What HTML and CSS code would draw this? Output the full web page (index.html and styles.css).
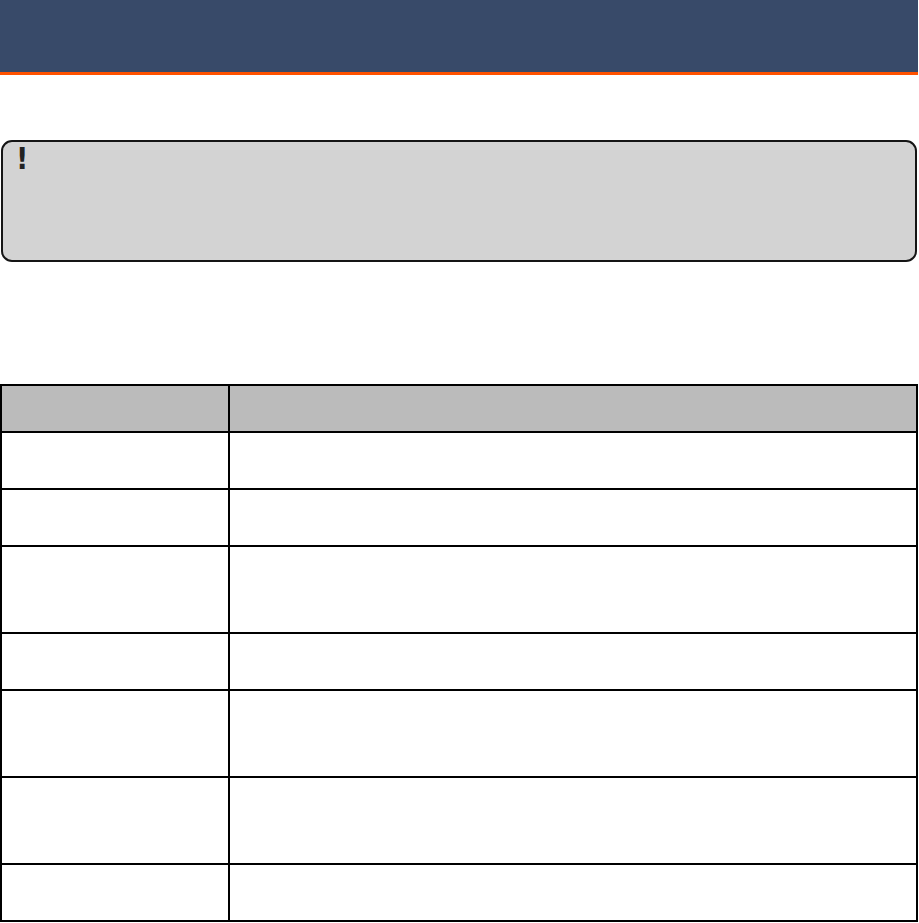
FILE: index.html
```html
<!DOCTYPE html>
<html>
<head>
<meta charset="utf-8">
<link rel="stylesheet" href="styles.css">
</head>
<body>
<header class="topbar"></header>
<main class="content">
  <div class="callout"><span class="bang">!</span></div>
  <table class="grid">
    <thead>
      <tr class="head"><th class="c1"></th><th class="c2"></th></tr>
    </thead>
    <tbody>
      <tr class="r1"><td></td><td></td></tr>
      <tr class="r1"><td></td><td></td></tr>
      <tr class="r2"><td></td><td></td></tr>
      <tr class="r1"><td></td><td></td></tr>
      <tr class="r2"><td></td><td></td></tr>
      <tr class="r2"><td></td><td></td></tr>
      <tr class="r1"><td></td><td></td></tr>
    </tbody>
  </table>
</main>
</body>
</html>
```
FILE: styles.css
```css
html, body {
  margin: 0;
  padding: 0;
  background: #ffffff;
  font-family: "Liberation Sans", Arial, sans-serif;
}
.topbar {
  width: 918px;
  height: 72px;
  background: #384a69;
  border-bottom: 3px solid #ff5200;
}
.content {
  padding: 65px 0 0 1px;
}
.callout {
  box-sizing: border-box;
  width: 916px;
  height: 122px;
  background: #d3d3d3;
  border: 2px solid #151515;
  border-radius: 11px;
  padding: 0 0 0 13px;
}
.bang {
  font-family: "DejaVu Sans Condensed", "DejaVu Sans", sans-serif;
  font-weight: bold;
  font-size: 30px;
  line-height: 34px;
  color: #222;
}
.grid {
  margin: 122px 0 0 -1px;
  border-collapse: collapse;
  width: 918px;
}
.grid th, .grid td {
  border: 2.5px solid #000;
  padding: 0;
}
.grid .c1 { width: 226px; }
.head th {
  background: #bbbbbb;
  height: 45px;
}
.r1 td { height: 55px; }
.r2 td { height: 85px; }
```
